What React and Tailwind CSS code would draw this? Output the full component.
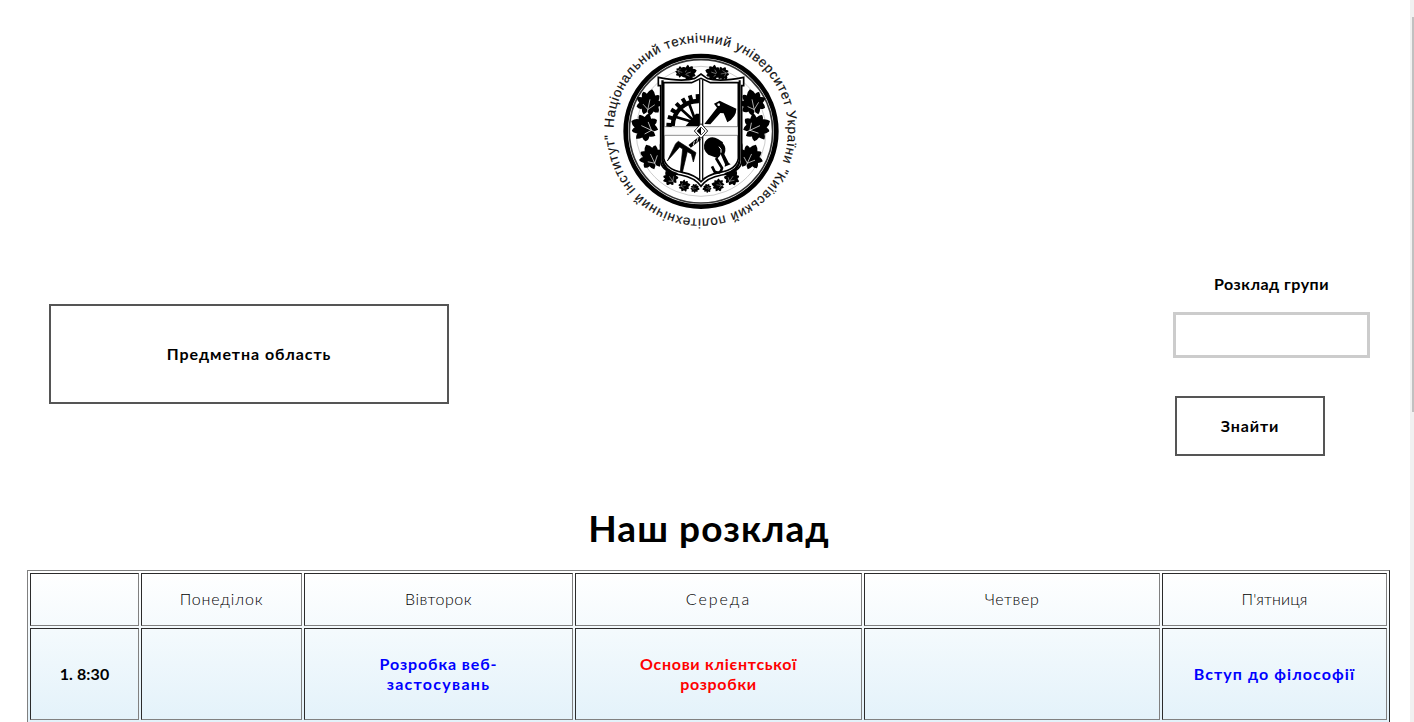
const days = [
  { name: "", tracking: "" },
  { name: "Понеділок", tracking: "tracking-[0.8px]" },
  { name: "Вівторок", tracking: "tracking-[0.5px]" },
  { name: "Середа", tracking: "tracking-[2px]" },
  { name: "Четвер", tracking: "tracking-[0.6px]" },
  { name: "П'ятниця", tracking: "tracking-[0.1px]" },
];

function Leaf({ x, y, r = 0, s = 1 }) {
  return (
    <g transform={`translate(${x} ${y}) rotate(${r}) scale(${s})`}>
      <path d="M0-44Q12-36 14-26Q24-32 28-28Q30-18 28-12Q40-10 44-4Q38 4 32 8Q38 18 36 26Q26 30 20 26Q16 38 10 42L0 32L-10 42Q-18 36-20 26Q-30 30-38 22Q-38 14-32 8Q-42 0-43-8Q-34-12-27-11Q-32-24-26-30Q-18-30-14-26Q-10-38 0-44Z" />
      <path d="M0 42V-10M0 24L-19 10M0 24L19 4" stroke="#fff" strokeWidth="2" fill="none" />
    </g>
  );
}

function Emblem() {
  const teeth = [3, 17, 31, 45, 59, 73, 87];
  return (
    <svg viewBox="0 0 630 630" className="h-[210px] w-[210px]" role="img">
      <defs>
        <path id="ring" d="M56 309A261.5 261.5 0 0 1 579 319A261.5 261.5 0 0 1 56 320" />
      </defs>
      <text fontFamily="Liberation Sans, Arial, sans-serif" fontSize="40" fill="#111" stroke="#111" strokeWidth="0.5">
        <textPath href="#ring" textLength="1633" lengthAdjust="spacing">
          Національний технічний університет України "Київський політехнічний інститут"
        </textPath>
      </text>
      <g fill="none" stroke="#000">
        <circle cx="318" cy="319" r="226" strokeWidth="14" />
        <circle cx="318" cy="319" r="215" strokeWidth="5" stroke="#333" />
        <circle cx="318" cy="319" r="195" strokeWidth="1.5" stroke="#999" />
      </g>
      <Leaf x={163} y={232} r={12} s={0.92} />
      <Leaf x={148} y={306} r={-65} s={0.98} />
      <Leaf x={170} y={395} r={-25} s={0.9} />
      <Leaf x={473} y={232} r={-12} s={0.92} />
      <Leaf x={486} y={306} r={65} s={0.98} />
      <Leaf x={466} y={395} r={25} s={0.9} />
      <Leaf x={282} y={143} r={72} s={0.55} />
      <Leaf x={258} y={141} r={110} s={0.4} />
      <Leaf x={354} y={143} r={-72} s={0.55} />
      <Leaf x={382} y={146} r={-100} s={0.48} />
      <Leaf x={226} y={458} r={-35} s={0.55} />
      <Leaf x={411} y={458} r={35} s={0.55} />
      <Leaf x={268} y={482} r={80} s={0.42} />
      <Leaf x={300} y={490} r={100} s={0.32} />
      <Leaf x={336} y={490} r={-100} s={0.32} />
      <Leaf x={369} y={480} r={-80} s={0.45} />
      <path d="M199 212Q196 242 205 265M199 348Q192 370 205 400M437 212Q441 242 432 265M437 348Q446 370 432 400M247 180L265 192L258 174M390 182L372 172" fill="none" stroke="#111" strokeWidth="5" />
      <path d="M190 157Q262 172 300 160L318 147L336 160Q374 172 446 157V182H440V410Q435 443 380 450Q336 458 318 484Q300 458 258 450Q202 443 197 410V182H190Z" fill="#fff" stroke="#000" strokeWidth="5" />
      <path d="M206 173H290L318 160L346 173H430V400Q424 434 375 442Q334 450 318 470Q302 450 262 442Q214 434 206 400Z" fill="#fff" stroke="#000" strokeWidth="5" />
      <path d="M199 166H206V405Q210 434 250 445L242 449Q202 440 199 405Z" />
      <path d="M437 166H431V405Q427 434 387 445L395 449Q434 440 437 405Z" />
      <path d="M314 165V466M323 165V466" stroke="#111" strokeWidth="4" />
      <path d="M209 306H428V330H209Z" fill="#fafafa" />
      <path d="M209 305H428M209 331H428" stroke="#777" strokeWidth="2.5" />
      <path d="M233 303A77 77 0 0 1 312 228" fill="none" stroke="#000" strokeWidth="13" />
      {teeth.map((a) => (
        <path key={a} d="M214 298h16v12h-16z" transform={`rotate(${a} 312 305)`} />
      ))}
      <path d="M304 294L257 251M304 294L283 238M304 294L243 276" stroke="#000" strokeWidth="8" />
      <path d="M272 303L303 266H312V303Z" />
      <path d="M328 297L366 248L357 236L374 227L386 233L424 251Q424 276 397 292L386 265L376 264L346 298Z" />
      <circle cx="371" cy="239" r="4" fill="#fff" />
      <path d="M314 340L284 364" stroke="#000" strokeWidth="11" />
      <path d="M309 338L305 352M298 348L295 361" stroke="#fff" strokeWidth="2.5" />
      <path d="M250 349L303 383L295 411L289 387L277 380L262 443L256 438L263 372L254 366L217 408L242 356Z" stroke="#000" strokeWidth="2" />
      <path d="M330 350Q346 328 369 342L384 352L377 372Q382 389 368 400L340 389Q320 372 330 350Z" />
      <path d="M371 362L383 354Q397 370 388 388L401 413L407 418L389 425L390 418L377 388Z" />
      <path d="M372 365Q381 372 378 383" stroke="#fff" strokeWidth="3" fill="none" />
      <path d="M363 399L381 429Q378 448 359 440L351 424" fill="none" stroke="#000" strokeWidth="8" />
      <path d="M318 296L338 318L318 340L298 318Z" fill="#fff" stroke="#222" strokeWidth="3" />
      <path d="M318 305L305 318L318 331Z" />
      <path d="M318 306L330 318L318 330" fill="none" stroke="#000" strokeWidth="2" />
    </svg>
  );
}

function Cell({ children, className = "" }) {
  return (
    <td className={`border border-t-[#2b2b2b] border-r-[#808080] border-b-[#808080] border-l-[#2b2b2b] p-0 text-center align-middle ${className}`}>
      {children}
    </td>
  );
}

export default function App() {
  return (
    <div className="flex h-[722px] w-[1414px] overflow-hidden bg-white font-['Lato','Open_Sans',sans-serif] text-base leading-5 text-black">
      <main className="flex w-[1410px] shrink-0 flex-col">
        <header className="flex justify-center pt-[25px] pr-[10px]">
          <Emblem />
        </header>
        <section className="flex h-[265px] items-start justify-between pr-[40px] pl-[49px]">
          <button className="mt-[69px] h-[100px] w-[400px] border-2 border-[#555] font-bold tracking-[0.94px]">Предметна область</button>
          <div className="flex w-[197px] flex-col pt-[39px]">
            <label className="text-center font-bold tracking-[0.5px]">Розклад групи</label>
            <input className="mt-[18px] h-[46px] w-[197px] border-3 border-[#ccc] outline-none" />
            <button className="mt-[38px] ml-[2px] h-[60px] w-[150px] border-2 border-[#555] font-bold tracking-[0.9px]">Знайти</button>
          </div>
        </section>
        <h1 className="h-[70px] pt-[6px] pl-[8px] text-center text-[37px] leading-[44px] font-bold tracking-[1.1px]">Наш розклад</h1>
        <table className="ml-[27px] w-[1363px] table-fixed border-separate border-spacing-[2px] border border-t-[#808080] border-r-[#2b2b2b] border-b-0 border-l-[#808080] bg-linear-to-b from-white to-[#e3f2fa]">
          <colgroup>
            <col className="w-[109px]" />
            <col className="w-[161px]" />
            <col className="w-[269px]" />
            <col className="w-[287px]" />
            <col className="w-[296px]" />
            <col className="w-[225px]" />
          </colgroup>
          <tbody>
            <tr className="h-[53px] font-light">
              {days.map((day) => (
                <Cell key={day.name} className={day.tracking}>
                  <div className="pb-[2px]">{day.name}</div>
                </Cell>
              ))}
            </tr>
            <tr className="h-[92px] font-bold">
              <Cell className="tracking-[0.1px]">1. 8:30</Cell>
              <Cell />
              <Cell className="text-[#00f]">
                <span className="tracking-[0.9px]">Розробка веб-</span>
                <br />
                <span className="tracking-[1.3px]">застосувань</span>
              </Cell>
              <Cell className="tracking-[0.7px] text-[#f00]">Основи клієнтської<br />розробки</Cell>
              <Cell />
              <Cell className="tracking-[1.07px] text-[#00f]">Вступ до філософії</Cell>
            </tr>
          </tbody>
        </table>
      </main>
      <aside className="w-[4px] shrink-0 bg-[#f1f1f1] pt-[17px] pl-[2px]">
        <div className="h-[395px] w-[2px] bg-[#c1c1c1]" />
      </aside>
    </div>
  );
}
